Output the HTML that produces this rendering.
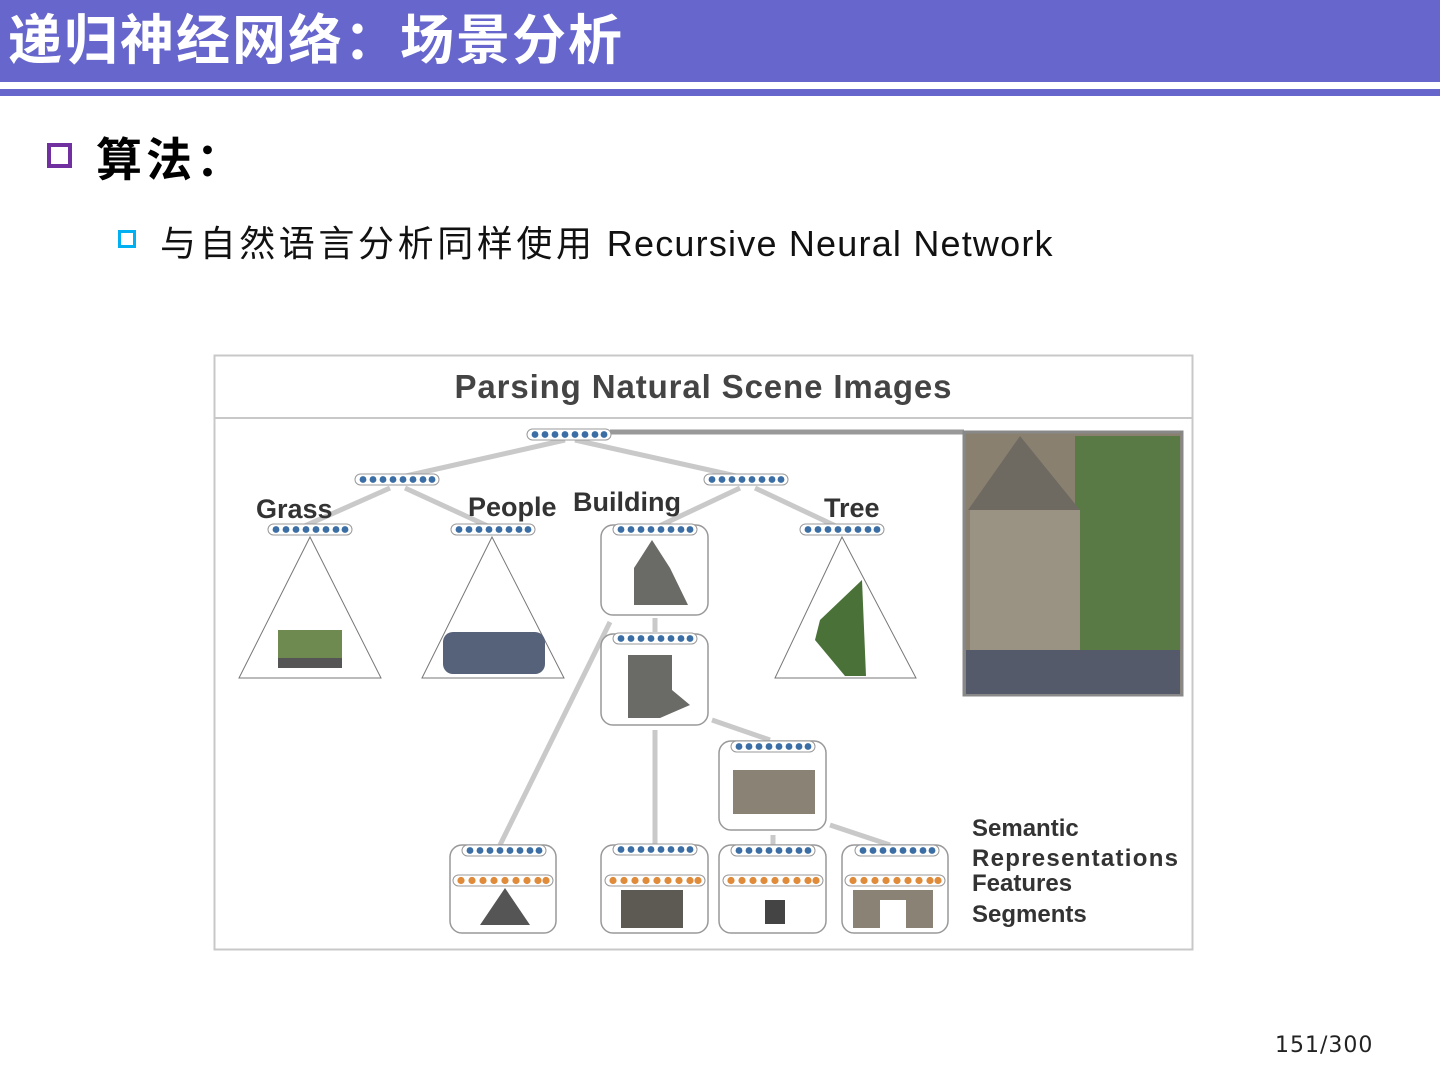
<!DOCTYPE html>
<html><head><meta charset="utf-8"><style>
body{margin:0;width:1440px;height:1080px;background:#fff;position:relative;overflow:hidden;font-family:"Liberation Sans","Noto Sans CJK SC",sans-serif}
.bar{position:absolute;left:0;top:0;width:1440px;height:82px;background:#6666cc}
.line{position:absolute;left:0;top:89px;width:1440px;height:7px;background:#6666cc}
.t{position:absolute;left:8px;top:8px;color:#fff;font-size:54px;font-weight:bold;line-height:66px;letter-spacing:2px}
.b1{position:absolute;left:47px;top:143px;width:17px;height:17px;border:4px solid #7030a0}
.h1{position:absolute;left:96px;top:128px;font-size:46px;font-weight:bold;line-height:64px;letter-spacing:4px}
.b2{position:absolute;left:118px;top:230px;width:12px;height:12px;border:3.5px solid #00b0f0}
.h2{position:absolute;left:160px;top:220px;font-size:36px;line-height:48px;color:#111;white-space:nowrap}
.h2 .c{letter-spacing:3.6px}
.h2 .l{letter-spacing:1.2px}
.pg{position:absolute;left:1275px;top:1033px;font-size:22px;color:#222;font-family:"DejaVu Sans",sans-serif;letter-spacing:1px}
svg{position:absolute;left:0;top:0}
</style></head><body>
<div class="bar"></div><div class="line"></div>
<div class="t">递归神经网络：场景分析</div>
<div class="b1"></div><div class="h1">算法：</div>
<div class="b2"></div><div class="h2"><span class="c">与自然语言分析同样使用</span><span class="l"> Recursive Neural Network</span></div>
<svg width="1440" height="1080">
<defs>
<g id="r"><rect x="0" y="0" width="84" height="11" rx="5.5" fill="#fff" stroke="#999"/><g fill="#3a6ea5"><circle cx="8" cy="5.5" r="3.4"/><circle cx="18" cy="5.5" r="3.4"/><circle cx="28" cy="5.5" r="3.4"/><circle cx="38" cy="5.5" r="3.4"/><circle cx="48" cy="5.5" r="3.4"/><circle cx="58" cy="5.5" r="3.4"/><circle cx="68" cy="5.5" r="3.4"/><circle cx="77" cy="5.5" r="3.4"/></g></g>
<g id="o"><rect x="0" y="0" width="100" height="11" rx="5.5" fill="#fff" stroke="#999"/><g fill="#e08b3a"><circle cx="8" cy="5.5" r="3.6"/><circle cx="19" cy="5.5" r="3.6"/><circle cx="30" cy="5.5" r="3.6"/><circle cx="41" cy="5.5" r="3.6"/><circle cx="52" cy="5.5" r="3.6"/><circle cx="63" cy="5.5" r="3.6"/><circle cx="74" cy="5.5" r="3.6"/><circle cx="85" cy="5.5" r="3.6"/><circle cx="93" cy="5.5" r="3.6"/></g></g>
</defs>
<rect x="214.5" y="355.5" width="978" height="594" fill="#fff" stroke="#c8c8c8" stroke-width="2"/>
<line x1="214" y1="418" x2="1193" y2="418" stroke="#c8c8c8" stroke-width="2"/>
<text x="703" y="398" text-anchor="middle" font-family="Liberation Sans,sans-serif" font-weight="bold" font-size="33" fill="#444" textLength="497">Parsing Natural Scene Images</text>
<g stroke="#c9c9c9" stroke-width="5" fill="none">
<line x1="610" y1="432" x2="964" y2="432" stroke="#999"/>
<line x1="397" y1="478" x2="565" y2="440"/><line x1="745" y1="478" x2="575" y2="440"/>
<line x1="300" y1="528" x2="390" y2="488"/><line x1="492" y1="528" x2="405" y2="488"/>
<line x1="655" y1="528" x2="740" y2="488"/><line x1="840" y1="528" x2="755" y2="488"/>
<line x1="655" y1="632" x2="655" y2="618"/>
<line x1="500" y1="845" x2="610" y2="622"/>
<line x1="655" y1="845" x2="655" y2="730"/>
<line x1="770" y1="740" x2="712" y2="720"/>
<line x1="890" y1="845" x2="830" y2="825"/>
<line x1="773" y1="845" x2="773" y2="835"/>
</g>
<g font-family="Liberation Sans,sans-serif" font-weight="bold" font-size="27" fill="#333">
<text x="256" y="518">Grass</text><text x="468" y="516">People</text><text x="573" y="511">Building</text><text x="824" y="517">Tree</text>
</g>
<g fill="none" stroke="#777" stroke-width="1">
<polygon points="310,537 239,678 381,678"/><polygon points="492,537 422,678 564,678"/><polygon points="842,537 775,678 916,678"/>
</g>
<g fill="#fff" stroke="#999" stroke-width="1.5">
<rect x="601" y="525" width="107" height="90" rx="12"/><rect x="601" y="634" width="107" height="91" rx="12"/>
<rect x="719" y="741" width="107" height="89" rx="12"/>
<rect x="450" y="845" width="106" height="88" rx="12"/><rect x="601" y="845" width="107" height="88" rx="12"/>
<rect x="719" y="845" width="107" height="88" rx="12"/><rect x="842" y="845" width="106" height="88" rx="12"/>
</g>
<use href="#r" x="527" y="429"/><use href="#r" x="355" y="474"/><use href="#r" x="704" y="474"/>
<use href="#r" x="268" y="524"/><use href="#r" x="451" y="524"/><use href="#r" x="613" y="524"/><use href="#r" x="800" y="524"/>
<use href="#r" x="613" y="633"/><use href="#r" x="731" y="741"/>
<use href="#r" x="462" y="845"/><use href="#r" x="613" y="844"/><use href="#r" x="731" y="845"/><use href="#r" x="855" y="845"/>
<use href="#o" x="453" y="875"/><use href="#o" x="605" y="875"/><use href="#o" x="723" y="875"/><use href="#o" x="845" y="875"/>
<rect x="278" y="630" width="64" height="28" fill="#6f8a50"/><rect x="278" y="658" width="64" height="10" fill="#555"/>
<rect x="443" y="632" width="102" height="42" rx="10" fill="#56617a"/>
<polygon points="652,540 634,568 634,605 688,605 670,568" fill="#6a6a66"/>
<polygon points="628,655 672,655 672,690 690,705 660,718 628,718" fill="#6a6a66"/>
<rect x="733" y="770" width="82" height="44" fill="#8a8274"/>
<polygon points="480,925 505,888 530,925" fill="#555"/>
<rect x="621" y="890" width="62" height="38" fill="#5d5a54"/>
<rect x="765" y="900" width="20" height="24" fill="#444"/>
<rect x="853" y="890" width="80" height="38" fill="#8a8274"/><rect x="880" y="900" width="26" height="28" fill="#fff"/>
<polygon points="820,620 862,580 866,676 845,676 815,640" fill="#4a7238"/>
<rect x="964" y="432" width="218" height="263" fill="#8a8070" stroke="#888" stroke-width="3"/>
<rect x="1075" y="436" width="105" height="230" fill="#5a7a45"/>
<polygon points="1020,436 968,510 1080,510" fill="#6e6a62"/>
<rect x="970" y="510" width="110" height="140" fill="#9a9282"/>
<rect x="966" y="650" width="214" height="44" fill="#555a6a"/>
<g font-family="Liberation Sans,sans-serif" font-weight="bold" font-size="24" fill="#333">
<text x="972" y="836">Semantic</text><text x="972" y="866" textLength="206">Representations</text><text x="972" y="891">Features</text><text x="972" y="922">Segments</text>
</g>
</svg>
<div class="pg">151/300</div>
</body></html>
